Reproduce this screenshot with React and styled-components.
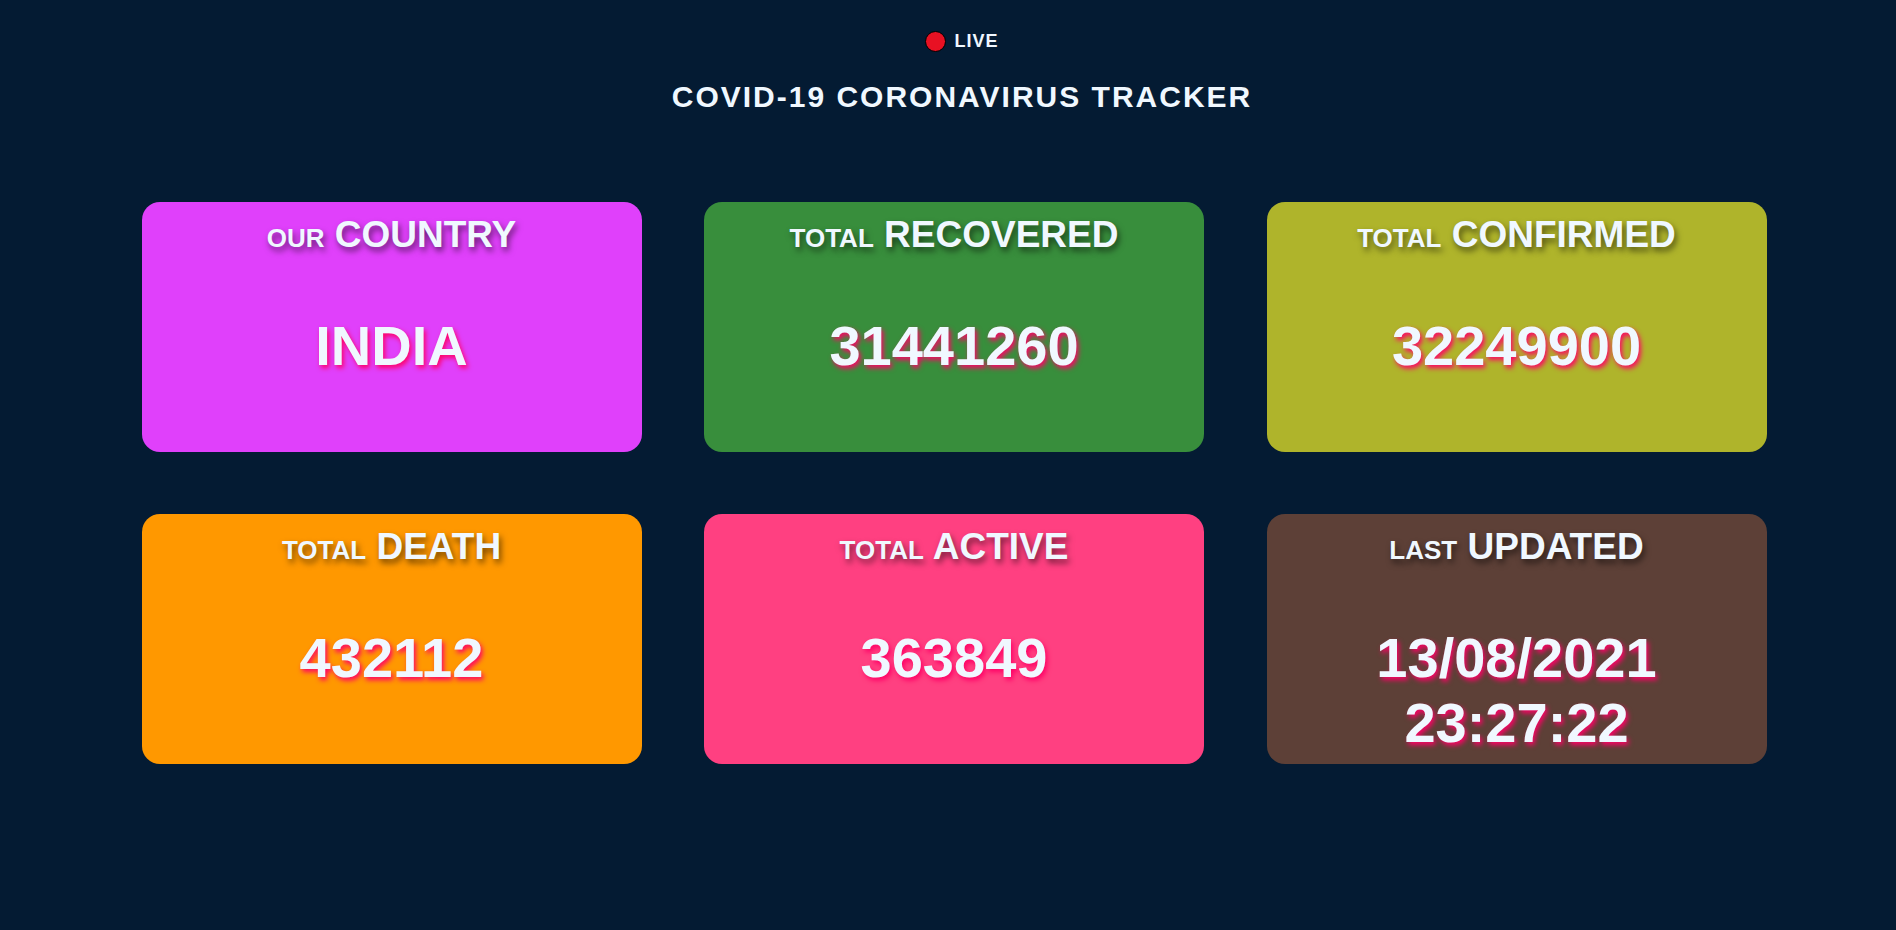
import React from "react";
import styled, { createGlobalStyle } from "styled-components";

const stats = [
    { small: "our", big: "COUNTRY", value: "INDIA", bg: "#e040fb" },
    { small: "total", big: "RECOVERED", value: "31441260", bg: "#388e3c" },
    { small: "total", big: "CONFIRMED", value: "32249900", bg: "#afb42b" },
    { small: "total", big: "DEATH", value: "432112", bg: "#ff9800" },
    { small: "total", big: "ACTIVE", value: "363849", bg: "#ff4081" },
    { small: "last", big: "UPDATED", value: ["13/08/2021", "23:27:22"], bg: "#5d4037" },
];

function App() {
    return (
        <>
            <GlobalStyle />
            <Main>
                <Header>
                    <Live>
                        <Dot />
                        <span>LIVE</span>
                    </Live>
                    <Title>COVID-19 CORONAVIRUS TRACKER</Title>
                </Header>
                <Grid>
                    {stats.map((s) => (
                        <Card key={s.big} bg={s.bg}>
                            <CardTitle>
                                {s.small} {s.big}
                            </CardTitle>
                            <Value>
                                {Array.isArray(s.value)
                                    ? s.value.map((v, i) => (
                                          <React.Fragment key={v}>
                                              {i > 0 && <br />}
                                              {v}
                                          </React.Fragment>
                                      ))
                                    : s.value}
                            </Value>
                        </Card>
                    ))}
                </Grid>
            </Main>
        </>
    );
}

export default App;

const GlobalStyle = createGlobalStyle`
    html, body {
        margin: 0;
        padding: 0;
        background-color: #041b33;
    }
    body {
        font-family: "Liberation Sans", Arial, sans-serif;
        color: #f0f8ff;
        min-height: 930px;
    }
`;
const Main = styled.main`
    padding: 31px 0 0 12px;
`;
const Header = styled.header`
    display: flex;
    flex-direction: column;
    align-items: center;
    padding-left: 16px;
`;
const Live = styled.div`
    display: flex;
    align-items: center;
    gap: 8px;
    font-size: 18px;
    font-weight: bold;
    letter-spacing: 1px;
    height: 21px;
`;
const Dot = styled.span`
    display: block;
    width: 19px;
    height: 19px;
    border-radius: 50%;
    background-color: #e81123;
    border: 1px solid #000;
`;
const Title = styled.h1`
    margin: 28px 0 0;
    font-size: 30px;
    font-weight: bold;
    letter-spacing: 2px;
    line-height: normal;
`;
const Grid = styled.section`
    display: grid;
    grid-template-columns: repeat(3, 500px);
    column-gap: 62.5px;
    row-gap: 62px;
    justify-content: center;
    margin-top: 88px;
`;
const Card = styled.div`
    height: 250px;
    box-sizing: border-box;
    padding-top: 12px;
    border-radius: 18px;
    background-color: ${(p) => p.bg};
    text-align: center;
`;
const CardTitle = styled.h2`
    margin: 0;
    font-size: 37px;
    font-weight: bold;
    font-variant: small-caps;
    line-height: normal;
    text-shadow: 2px 4px 6px rgba(0, 0, 0, 0.55);
`;
const Value = styled.p`
    margin: 57px 0 0;
    font-size: 56px;
    font-weight: bold;
    line-height: normal;
    text-shadow: 2px 3px 5px #ff0066;
`;
